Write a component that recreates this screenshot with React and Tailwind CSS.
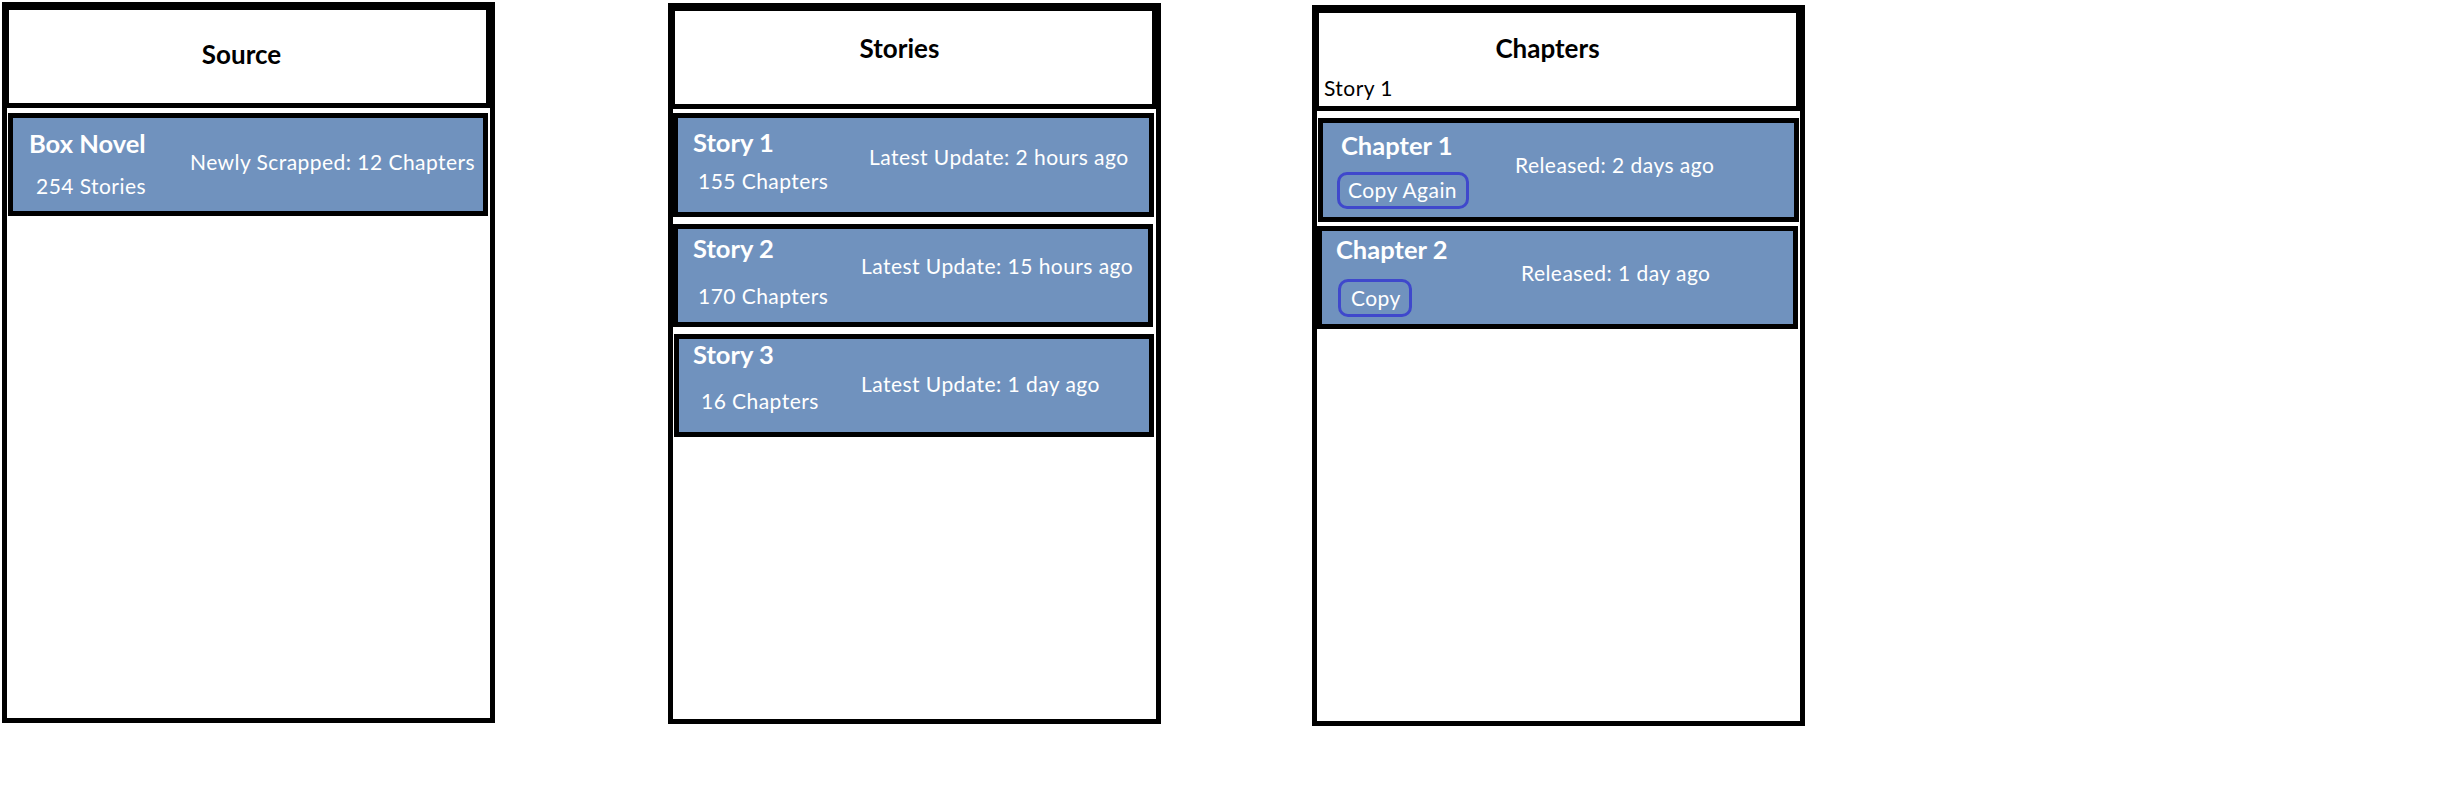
import React from "react";

function Panel({ className, header, children }) {
  return (
    <div className={"flex h-[721px] w-[493px] shrink-0 flex-col " + className}>
      <div className="h-[106px] shrink-0 border-t-[8px] border-b-[5px] border-l-[7px] border-r-[9px] border-black bg-white">
        {header}
      </div>
      <div className="flex flex-1 flex-col border-x-[5px] border-b-[5px] border-black bg-white">
        {children}
      </div>
    </div>
  );
}

const reg = "text-[21px] leading-[20px] tracking-[0.45px] whitespace-nowrap";
const bold = "text-[25.5px] leading-[25px] font-bold whitespace-nowrap";
const head = "text-[26px] leading-[24px] font-bold text-black text-center";

export default function App() {
  return (
    <div className="flex h-[809px] w-[2444px] items-start bg-white pl-[2px] pt-[2px] font-['Lato',sans-serif] text-white">
      {/* Source */}
      <Panel
        className=""
        header={<div className={"pt-[32px] pr-[12px] " + head}>Source</div>}
      >
        <div className="ml-[1px] mr-[2px] mt-[5px] flex h-[103px] border-[5px] border-black bg-[#7092be]">
          <div className="w-[177px] shrink-0 pl-[16px] pt-[13px]">
            <div className={bold}>Box Novel</div>
            <div className={"mt-[20px] pl-[7px] " + reg}>254 Stories</div>
          </div>
          <div className={"pt-[34px] " + reg}>Newly Scrapped: 12 Chapters</div>
        </div>
      </Panel>

      {/* Stories */}
      <Panel
        className="ml-[173px] mt-[1px]"
        header={<div className={"pt-[25px] pr-[28px] " + head}>Stories</div>}
      >
        <div className="mr-[2px] mt-[4px] flex h-[104px] border-[5px] border-black bg-[#7092be]">
          <div className="w-[191px] shrink-0 pl-[15px] pt-[12px]">
            <div className={bold}>Story 1</div>
            <div className={"mt-[16px] pl-[5px] " + reg}>155 Chapters</div>
          </div>
          <div className={"pt-[29px] " + reg}>Latest Update: 2 hours ago</div>
        </div>
        <div className="mr-[3px] mt-[7px] flex h-[103px] border-[5px] border-black bg-[#7092be]">
          <div className="w-[183px] shrink-0 pl-[15px] pt-[7px]">
            <div className={bold}>Story 2</div>
            <div className={"mt-[25px] pl-[5px] " + reg}>170 Chapters</div>
          </div>
          <div className={"pt-[27px] " + reg}>Latest Update: 15 hours ago</div>
        </div>
        <div className="ml-[1px] mr-[2px] mt-[7px] flex h-[103px] border-[5px] border-black bg-[#7092be]">
          <div className="w-[182px] shrink-0 pl-[14px] pt-[3px]">
            <div className={bold}>Story 3</div>
            <div className={"mt-[24px] pl-[8px] " + reg}>16 Chapters</div>
          </div>
          <div className={"pt-[35px] " + reg}>Latest Update: 1 day ago</div>
        </div>
      </Panel>

      {/* Chapters */}
      <Panel
        className="ml-[151px] mt-[3px]"
        header={
          <div className="pt-[23px]">
            <div className={"pr-[20px] " + head}>Chapters</div>
            <div className={"mt-[18px] pl-[5px] text-black " + reg}>Story 1</div>
          </div>
        }
      >
        <div className="ml-[1px] mr-[1px] mt-[7px] flex h-[104px] border-[5px] border-black bg-[#7092be]">
          <div className="w-[192px] shrink-0 pl-[14px] pt-[10px]">
            <div className={"ml-[4px] " + bold}>Chapter 1</div>
            <div className={"mt-[14px] h-[37px] w-[132px] rounded-[10px] border-[3px] border-[#3f48cc] pl-[8px] pt-[5px] " + reg}>
              Copy Again
            </div>
          </div>
          <div className={"pt-[32px] " + reg}>Released: 2 days ago</div>
        </div>
        <div className="mr-[2px] mt-[4px] flex h-[103px] border-[5px] border-black bg-[#7092be]">
          <div className="w-[199px] shrink-0 pl-[14px] pt-[6px]">
            <div className={bold}>Chapter 2</div>
            <div className={"ml-[2px] mt-[17px] h-[38px] w-[74px] rounded-[10px] border-[3px] border-[#3f48cc] pl-[10px] pt-[6px] " + reg}>
              Copy
            </div>
          </div>
          <div className={"pt-[32px] " + reg}>Released: 1 day ago</div>
        </div>
      </Panel>
    </div>
  );
}
